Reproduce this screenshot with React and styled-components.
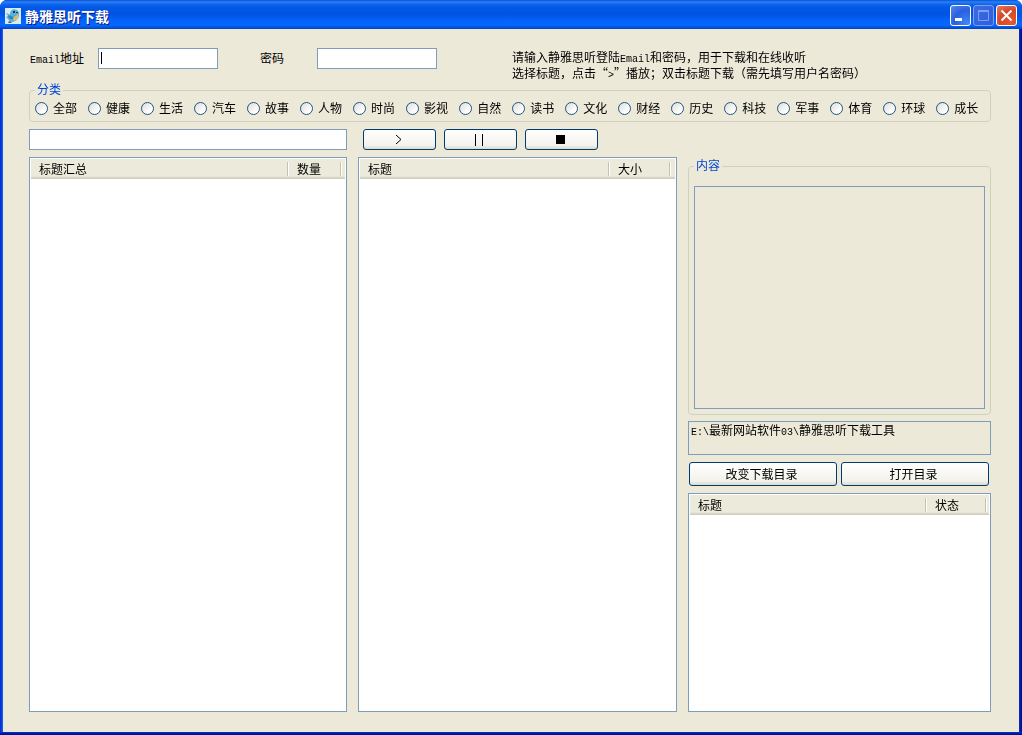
import React from "react";
import styled, { createGlobalStyle } from "styled-components";

const Global = createGlobalStyle`
  *, *::before, *::after { box-sizing: border-box; }
  html, body { margin: 0; padding: 0; background: #fff; }
  body, button, input, table, textarea {
    font-family: "Noto Sans CJK SC", "Liberation Sans", sans-serif;
    font-size: 12px;
    line-height: 16px;
    color: #000;
  }
  body { text-spacing-trim: space-all; }
`;

const Window = styled.div`
  display: flex;
  flex-direction: column;
  min-height: 100vh;
  border-radius: 7px 7px 0 0;
  overflow: hidden;
  background:
    linear-gradient(to top, #00138c 1px, #0831d9 3px) left bottom / 100% 3px no-repeat,
    linear-gradient(to right, #0831d9 1px, #166aee 3px) left top / 3px 100% no-repeat,
    linear-gradient(to left, #00138c 1px, #0831d9 3px) right top / 3px 100% no-repeat,
    #0831d9;
`;

const TitleBar = styled.header`
  display: flex;
  align-items: center;
  height: 29px;
  padding: 2px 5px 0;
  gap: 4px;
  background: linear-gradient(
    to bottom,
    #0a4fd0 0,
    #2b80f8 2px,
    #0f68ee 4px,
    #0458e6 7px,
    #0054e3 14px,
    #0463fa 21px,
    #0568ff 25px,
    #0458e0 27px,
    #0140c4 29px
  );
`;

const Title = styled.h1`
  flex: 1;
  margin: 0;
  font-size: 14px;
  line-height: 16px;
  font-weight: 700;
  color: #fff;
  text-shadow: 1px 1px 0 #0a1883;
`;

const Controls = styled.div`
  display: flex;
  gap: 2px;
`;

const tones = {
  blue: "radial-gradient(circle at 85% 90%, #3f86f7, #2a5fe0 55%, #5c86ea)",
  dim: "linear-gradient(135deg, #3f6be0, #2a5ede)",
  red: "radial-gradient(circle at 75% 85%, #e8582c, #d5482a 55%, #e88064)",
};

const ControlButton = styled.button`
  display: flex;
  width: 21px;
  height: 21px;
  padding: 0;
  border: 1px solid ${(p) => (p.$tone === "dim" ? "#7d9fee" : "#fff")};
  border-radius: 3px;
  background: ${(p) => tones[p.$tone]};
`;

const Client = styled.main`
  flex: 1;
  display: flex;
  flex-direction: column;
  margin: 0 3px 3px;
  padding: 19px 28px 20px 26px;
  background: #ece9d8;
`;

const Latin = styled.span`
  font-family: "Liberation Mono", monospace;
  font-size: 10px;
  line-height: 10px;
`;

const LoginRow = styled.form`
  display: flex;
  align-items: flex-start;
  height: 35px;
  padding-left: 1px;
`;

const Field = styled.label`
  display: flex;
  align-items: center;
  height: 20px;
  gap: ${(p) => p.$gap}px;
  margin-right: ${(p) => p.$after}px;
  white-space: nowrap;
`;

const TextBox = styled.input`
  width: ${(p) => p.$width || "120px"};
  height: 21px;
  min-width: 0;
  padding: 1px 2px;
  border: 1px solid #7f9db9;
  border-radius: 0;
  outline: none;
  background: #fff;
  &:focus:placeholder-shown {
    caret-color: transparent;
    background: linear-gradient(#000, #000) 2px 3px / 1px 12px no-repeat #fff;
  }
`;

const Hint = styled.p`
  margin: 1px 0 0;
  white-space: nowrap;
`;

const Group = styled.fieldset`
  min-width: 0;
  margin: ${(p) => p.$top || 0}px 0 0;
  padding: ${(p) => p.$pad};
  border: 1px solid #d0d0bf;
  border-radius: 4px;
`;

const Legend = styled.legend`
  height: 14px;
  padding: 0 2px;
  line-height: 12px;
  color: #0046d5;
`;

const Categories = styled.div`
  display: flex;
  flex-wrap: wrap;
  gap: 4px 11px;
`;

const Category = styled.label`
  display: flex;
  align-items: center;
  gap: 5px;
  height: 14px;
  line-height: 14px;
  white-space: nowrap;
`;

const Radio = styled.input`
  appearance: none;
  width: 13px;
  height: 13px;
  margin: 0;
  border: 1px solid #21527f;
  border-radius: 50%;
  background: linear-gradient(135deg, #dcdcd7, #fff 75%);
  &:checked {
    background: radial-gradient(circle, #21a121 0 2px, #fff 3px);
  }
`;

const columns = "minmax(0, 318fr) minmax(0, 319fr) minmax(0, 303fr)";

const Toolbar = styled.div`
  display: grid;
  grid-template-columns: ${columns};
  column-gap: 11px;
  margin: 7px 0;
`;

const Player = styled.div`
  display: flex;
  gap: 8px;
  padding-left: 5px;
`;

const Button = styled.button`
  display: flex;
  align-items: center;
  justify-content: center;
  flex: ${(p) => (p.$wide ? "1" : "0 0 73px")};
  height: ${(p) => (p.$wide ? 24 : 21)}px;
  padding: 0 3px 0 0;
  border: 1px solid #003c74;
  border-radius: 3px;
  background: linear-gradient(#fff, #f3f2ec 80%, #dcd8cc);
`;

const Panels = styled.div`
  flex: 1;
  display: grid;
  grid-template-columns: ${columns};
  column-gap: 11px;
`;

const Side = styled.div`
  display: flex;
  flex-direction: column;
`;

const Content = styled.div`
  height: 223px;
  border: 1px solid #7f9db9;
`;

const Path = styled.output`
  display: block;
  height: 34px;
  margin: 6px 0 7px;
  padding: 0 2px;
  border: 1px solid #7f9db9;
`;

const Actions = styled.div`
  display: flex;
  gap: 4px;
  padding: 0 2px 0 1px;
  margin-bottom: 7px;
`;

const ListBox = styled.div`
  flex: 1;
  padding: 1px;
  border: 1px solid #7f9db9;
  background: #fff;
`;

const List = styled.table`
  width: 100%;
  table-layout: fixed;
  border-collapse: collapse;
`;

const HeadCell = styled.th`
  width: ${(p) => p.$width || "auto"};
  height: 20px;
  padding: 0 0 1px 8px;
  font-weight: 400;
  text-align: left;
  background:
    linear-gradient(#c5c2b2, #c5c2b2) right 1px top 3px / 1px 14px no-repeat,
    linear-gradient(#fff, #fff) right 0 top 3px / 1px 14px no-repeat,
    linear-gradient(#ebeadb 17px, #e2decd 18px, #d6d2c2 19px, #cbc7b8 20px);
  &:last-child {
    padding: 0;
    background: linear-gradient(#ebeadb 17px, #e2decd 18px, #d6d2c2 19px, #cbc7b8 20px);
  }
`;

const categories = [
  "全部", "健康", "生活", "汽车", "故事", "人物", "时尚", "影视", "自然",
  "读书", "文化", "财经", "历史", "科技", "军事", "体育", "环球", "成长",
];

function BirdIcon() {
  return (
    <svg width="16" height="16" viewBox="0 0 16 16" aria-hidden="true">
      <rect width="16" height="16" fill="#d8ecf0" />
      <path d="M6 3c1-2 4-2 6-1 2 1 2 3 2 5 0 3-3 6-6 7-2 0-4-1-5-3L1 9l2-1-2-3 3 1 1 1c0-2 0-3 1-4z" fill="#5aaedb" />
      <path d="M3 8c2-1 4 0 6 2-2 2-5 2-6-2z" fill="#2c86c2" />
      <path d="M9 9c2-1 3-2 4-3 1 3-1 6-4 7-1-1-1-3 0-4z" fill="#e0bd62" />
      <path d="M8 3h2v2h-2zM11 4h2v1h-2z" fill="#173a5c" />
      <path d="M4 13l3 1-1 1-3 0z" fill="#3c6b8a" />
    </svg>
  );
}

function DataList({ first, second, secondWidth, rest }) {
  return (
    <ListBox>
      <List>
        <thead>
          <tr>
            <HeadCell scope="col">{first}</HeadCell>
            <HeadCell scope="col" $width={secondWidth}>{second}</HeadCell>
            <HeadCell as="td" $width={rest} />
          </tr>
        </thead>
        <tbody />
      </List>
    </ListBox>
  );
}

export default function App() {
  return (
    <>
      <Global />
      <Window lang="zh-CN">
        <TitleBar>
          <BirdIcon />
          <Title>静雅思听下载</Title>
          <Controls>
            <ControlButton type="button" $tone="blue" aria-label="最小化">
              <svg width="19" height="19"><rect x="4" y="12" width="7" height="3" fill="#fff" /></svg>
            </ControlButton>
            <ControlButton type="button" $tone="dim" aria-label="最大化" disabled>
              <svg width="19" height="19" fill="none" stroke="#7d9fee">
                <path d="M4.500 4.500h10v10h-10zM4 5.500h11" />
              </svg>
            </ControlButton>
            <ControlButton type="button" $tone="red" aria-label="关闭">
              <svg width="19" height="19" stroke="#fff" strokeWidth="2"><path d="M4.500 4.500l10 10M14.500 4.500l-10 10" /></svg>
            </ControlButton>
          </Controls>
        </TitleBar>
        <Client>
          <LoginRow>
            <Field $gap={14} $after={42}>
              <span><Latin>Email</Latin>地址</span>
              <TextBox type="email" placeholder=" " autoFocus />
            </Field>
            <Field $gap={33} $after={75}>
              密码
              <TextBox type="password" placeholder=" " />
            </Field>
            <Hint>
              请输入静雅思听登陆<Latin>Email</Latin>和密码，用于下载和在线收听
              <br />
              选择标题，点击“<Latin>&gt;</Latin>”播放；双击标题下载（需先填写用户名密码）
            </Hint>
          </LoginRow>
          <Group $pad="4px 5px 6px">
            <Legend>分类</Legend>
            <Categories>
              {categories.map((name) => (
                <Category key={name}>
                  <Radio type="radio" name="category" />
                  {name}
                </Category>
              ))}
            </Categories>
          </Group>
          <Toolbar>
            <TextBox type="text" $width="100%" placeholder=" " aria-label="标题" />
            <Player>
              <Button type="button" aria-label="播放">
                <svg width="7" height="11" fill="none" stroke="#000"><path d="M1 1l5 4.500l-5 4.500" /></svg>
              </Button>
              <Button type="button" aria-label="暂停">
                <svg width="8" height="12" stroke="#000"><path d="M0.500 0v12M7.500 0v12" /></svg>
              </Button>
              <Button type="button" aria-label="停止">
                <svg width="9" height="9"><rect width="9" height="9" /></svg>
              </Button>
            </Player>
          </Toolbar>
          <Panels>
            <DataList first="标题汇总" second="数量" secondWidth="53px" rest="3px" />
            <DataList first="标题" second="大小" secondWidth="61px" rest="4px" />
            <Side>
              <Group $pad="13px 5px 5px" $top={2}>
                <Legend>内容</Legend>
                <Content />
              </Group>
              <Path>
                <Latin>E:\</Latin>最新网站软件<Latin>03\</Latin>静雅思听下载工具
              </Path>
              <Actions>
                <Button type="button" $wide>改变下载目录</Button>
                <Button type="button" $wide>打开目录</Button>
              </Actions>
              <DataList first="标题" second="状态" secondWidth="60px" rest="2px" />
            </Side>
          </Panels>
        </Client>
      </Window>
    </>
  );
}
